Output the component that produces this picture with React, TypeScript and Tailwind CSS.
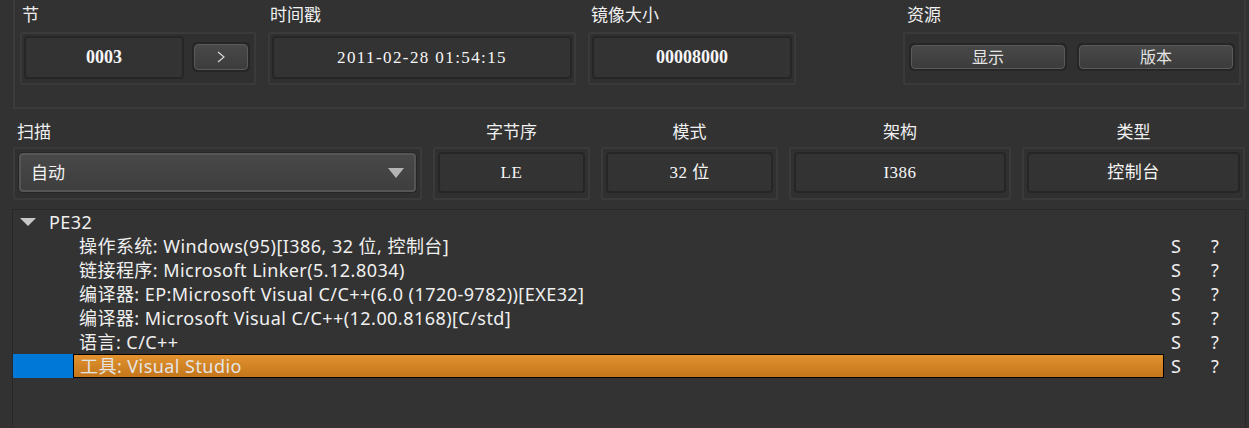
import React from "react";

const sans = { fontFamily: '"Noto Sans", "Noto Sans CJK SC", sans-serif' };
const serif = { fontFamily: '"Liberation Serif", "Noto Sans CJK SC", serif' };

function Frame({ className = "", children }: { className?: string; children: React.ReactNode }) {
  return (
    <div className={`h-[53px] rounded-[2px] border-2 border-[#3a3a3a] bg-[#303030] p-[2px] pb-[4px] ${className}`}>
      {children}
    </div>
  );
}

function ValueBox({ value, className = "" }: { value: string; className?: string }) {
  return (
    <div
      className={`flex h-full items-center justify-center rounded-[4px] border-2 border-[#262626] bg-[#333333] text-[#f6f6f6] ${className}`}
      style={serif}
    >
      {value}
    </div>
  );
}

function PushButton({ children, className = "" }: { children: React.ReactNode; className?: string }) {
  return (
    <div className={`rounded-[5px] bg-[#262626] p-[2px] ${className}`}>
      <div className="flex h-full items-center justify-center rounded-[4px] border border-[#5a5a5a] bg-gradient-to-b from-[#484848] to-[#3c3c3c] text-[16px] text-[#e6e6e6]">
        {children}
      </div>
    </div>
  );
}

const rows = [
  "操作系统: Windows(95)[I386, 32 位, 控制台]",
  "链接程序: Microsoft Linker(5.12.8034)",
  "编译器: EP:Microsoft Visual C/C++(6.0 (1720-9782))[EXE32]",
  "编译器: Microsoft Visual C/C++(12.00.8168)[C/std]",
  "语言: C/C++",
  "工具: Visual Studio",
];

export default function App() {
  return (
    <div className="relative h-[428px] w-[1249px] overflow-hidden bg-[#323232] text-[#f0f0f0]" style={sans}>
      {/* top group */}
      <div className="ml-[13px] h-[109px] w-[1233px] border-x-2 border-b-2 border-[#3b3b3b]">
        <div className="flex pl-[5px] pt-[4px]">
          <div className="flex w-[236px] flex-col">
            <div className="h-[24px] pl-[2px] text-[17px] leading-[22px]">节</div>
            <Frame className="mt-[4px] flex gap-[8px]">
              <div className="w-[160px]">
                <ValueBox value="0003" className="text-[18px] font-bold" />
              </div>
              <PushButton className="mt-[6px] h-[30px] w-[58px]">
                <svg width="10" height="14" viewBox="0 0 10 14">
                  <polyline points="2,2 8,7 2,12" fill="none" stroke="#d8d8d8" strokeWidth="1.2" />
                </svg>
              </PushButton>
            </Frame>
          </div>
          <div className="ml-[12px] flex w-[308px] flex-col">
            <div className="h-[24px] pl-[2px] text-[17px] leading-[22px]">时间戳</div>
            <Frame className="mt-[4px]">
              <ValueBox value="2011-02-28 01:54:15" className="text-[17px] tracking-[1.4px]" />
            </Frame>
          </div>
          <div className="ml-[12px] flex w-[208px] flex-col">
            <div className="h-[24px] pl-[3px] text-[17px] leading-[22px]">镜像大小</div>
            <Frame className="mt-[4px]">
              <ValueBox value="00008000" className="text-[18px] font-bold" />
            </Frame>
          </div>
          <div className="ml-[107px] flex w-[338px] flex-col">
            <div className="h-[24px] pl-[4px] text-[17px] leading-[22px]">资源</div>
            <Frame className="mt-[4px] flex gap-[10px] px-[4px] pt-[9px]">
              <PushButton className="h-[28px] w-[158px]">显示</PushButton>
              <PushButton className="h-[28px] w-[158px]">版本</PushButton>
            </Frame>
          </div>
        </div>
      </div>

      {/* second row */}
      <div className="ml-[13px] mt-[12px] flex gap-[11px]">
        <div className="flex w-[409px] flex-col">
          <div className="h-[24px] pl-[4px] text-[17px] leading-[22px]">扫描</div>
          <div className="mt-[2px] h-[53px] rounded-[2px] border-2 border-[#3a3a3a] bg-[#303030] p-[3px] pb-[5px]">
            <div className="h-full rounded-[5px] bg-[#262626] p-[1px]">
              <div className="flex h-full items-center justify-between rounded-[4px] border-2 border-[#555555] bg-gradient-to-b from-[#484848] to-[#3e3e3e] pl-[10px] pr-[10px] text-[17px] text-[#f2f2f2]">
                <span>自动</span>
                <svg width="16" height="10" viewBox="0 0 16 10">
                  <polygon points="0,0 16,0 8,10" fill="#b4b4b4" />
                </svg>
              </div>
            </div>
          </div>
        </div>
        {[
          { label: "字节序", value: "LE", w: "w-[157px]" },
          { label: "模式", value: "32 位", w: "w-[177px]" },
          { label: "架构", value: "I386", w: "w-[222px]" },
          { label: "类型", value: "控制台", w: "w-[223px]" },
        ].map((c) => (
          <div key={c.label} className={`flex flex-col ${c.w}`}>
            <div className="h-[24px] text-center text-[17px] leading-[22px]">{c.label}</div>
            <div className="mt-[2px] h-[53px] rounded-[2px] border-2 border-[#3a3a3a] bg-[#303030] p-[3px] pb-[5px]">
              <ValueBox value={c.value} className="text-[17px] tracking-[0.5px]" />
            </div>
          </div>
        ))}
      </div>

      {/* tree view */}
      <div className="ml-[12px] mt-[9px] h-[240px] w-[1234px] border-l border-t border-r border-[#282828] bg-[#333333] text-[18px] tracking-[0.45px]">
        <div className="flex h-[24px] items-center">
          <svg className="ml-[7px]" width="16" height="8" viewBox="0 0 16 8">
            <polygon points="0,0 16,0 8,8" fill="#c8c8c8" />
          </svg>
          <span className="ml-[13px]">PE32</span>
        </div>
        {rows.map((r, i) => {
          const selected = i === rows.length - 1;
          return (
            <div key={r} className="flex h-[24px] items-stretch">
              <div className={`w-[60px] ${selected ? "bg-[#0078d7]" : ""}`} />
              <div
                className={`flex w-[1091px] items-center whitespace-nowrap pl-[6px] ${
                  selected
                    ? "border border-black bg-gradient-to-b from-[#e2922e] to-[#c3761a] text-[#e4e4e4]"
                    : ""
                }`}
              >
                {r}
              </div>
              <div className="flex w-[40px] items-center pl-[7px]">S</div>
              <div className="flex items-center pl-[7px]">?</div>
            </div>
          );
        })}
      </div>
    </div>
  );
}
